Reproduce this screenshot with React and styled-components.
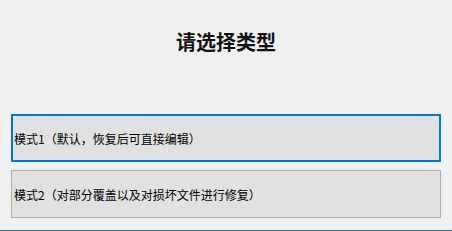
import React from 'react'
import styled, { createGlobalStyle } from 'styled-components'

const MODES = [
  { id: 1, label: '模式1（默认，恢复后可直接编辑）' },
  { id: 2, label: '模式2（对部分覆盖以及对损坏文件进行修复）' },
]

const GlobalStyle = createGlobalStyle`
  html, body {
    margin: 0;
    padding: 0;
    background: #f0f0f0;
  }
`

export default function App() {
  const [selected] = React.useState(1)

  return (
    <>
      <GlobalStyle />
      <Wrapper>
        <Title>请选择类型</Title>
        <ModeList>
          {MODES.map((mode) => (
            <ModeButton key={mode.id} $focused={mode.id === selected}>
              {mode.label}
            </ModeButton>
          ))}
        </ModeList>
        <BottomLine />
      </Wrapper>
    </>
  )
}

const Wrapper = styled.div`
  display: flex;
  flex-direction: column;
  height: 231px;
  padding-top: 32px;
  box-sizing: border-box;
  background: #f0f0f0;
  overflow: hidden;
`

const Title = styled.h1`
  margin: 0;
  font-family: "Noto Sans CJK SC", serif;
  font-size: 20px;
  line-height: 20px;
  font-weight: 700;
  color: #111;
  text-align: center;
`

const ModeList = styled.div`
  display: flex;
  flex-direction: column;
  gap: 8px;
  margin-top: 62px;
  padding: 0 11px;
`

const ModeButton = styled.button`
  display: flex;
  align-items: center;
  height: 48px;
  width: 100%;
  box-sizing: border-box;
  margin: 0;
  padding: 0 0 0 ${(p) => (p.$focused ? 1 : 2)}px;
  background: #e1e1e1;
  border: ${(p) => (p.$focused ? '2px solid #0078d7' : '1px solid #adadad')};
  border-radius: 0;
  font-family: "Noto Sans CJK SC", sans-serif;
  font-size: 12px;
  color: #000;
  text-align: left;
  outline: none;
  cursor: pointer;
`

const BottomLine = styled.div`
  margin-top: 12px;
  height: 1px;
  background: #0078d7;
`
